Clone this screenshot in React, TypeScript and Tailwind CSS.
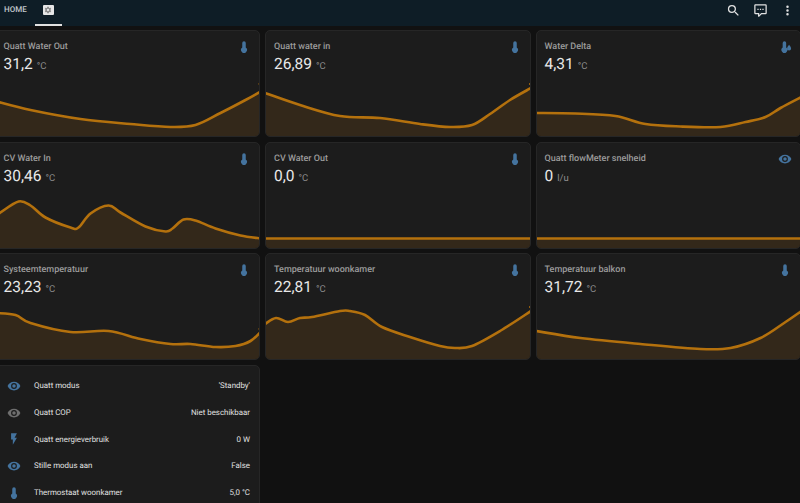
const thermometerSolid = "M15 13V5A3 3 0 0 0 9 5V13A5 5 0 1 0 15 13Z";
const eye = "M12,9A3,3 0 0,0 9,12A3,3 0 0,0 12,15A3,3 0 0,0 15,12A3,3 0 0,0 12,9M12,17A5,5 0 0,1 7,12A5,5 0 0,1 12,7A5,5 0 0,1 17,12A5,5 0 0,1 12,17M12,4.5C7,4.5 2.73,7.61 1,12C2.73,16.39 7,19.5 12,19.5C17,19.5 21.27,16.39 23,12C21.27,7.61 17,4.5 12,4.5Z";
const flash = "M7,2V13H10V22L17,10H13L17,2H7Z";
const thermoWater = "M8 13V5A3 3 0 0 1 14 5V13A5 5 0 1 1 8 13Z M19 8C19 8 15.5 12 15.5 14.5A3.5 3.5 0 0 0 22.5 14.5C22.5 12 19 8 19 8Z";
const magnify = "M9.5,3A6.5,6.5 0 0,1 16,9.5C16,11.11 15.41,12.59 14.44,13.73L14.71,14H15.5L20.5,19L19,20.5L14,15.5V14.71L13.73,14.44C12.59,15.41 11.11,16 9.5,16A6.5,6.5 0 0,1 3,9.5A6.5,6.5 0 0,1 9.5,3M9.5,5C7,5 5,7 5,9.5C5,12 7,14 9.5,14C12,14 14,12 14,9.5C14,7 12,5 9.5,5Z";
const comment = "M9,22A1,1 0 0,1 8,21V18H4A2,2 0 0,1 2,16V4C2,2.89 2.9,2 4,2H20A2,2 0 0,1 22,4V16A2,2 0 0,1 20,18H13.9L10.2,21.71C10,21.9 9.75,22 9.5,22V22H9M10,16V19.08L13.08,16H20V4H4V16H10M17,11V9H15V11H17M13,11V9H11V11H13M9,11V9H7V11H9Z";
const dots = "M12,16A2,2 0 0,1 14,18A2,2 0 0,1 12,20A2,2 0 0,1 10,18A2,2 0 0,1 12,16M12,10A2,2 0 0,1 14,12A2,2 0 0,1 12,14A2,2 0 0,1 10,12A2,2 0 0,1 12,10M12,4A2,2 0 0,1 14,6A2,2 0 0,1 12,8A2,2 0 0,1 10,6A2,2 0 0,1 12,4Z";
const cog = "M12,15.5A3.5,3.5 0 0,1 8.5,12A3.5,3.5 0 0,1 12,8.5A3.5,3.5 0 0,1 15.5,12A3.5,3.5 0 0,1 12,15.5M19.43,12.97C19.47,12.65 19.5,12.33 19.5,12C19.5,11.67 19.47,11.34 19.43,11L21.54,9.37C21.73,9.22 21.78,8.95 21.66,8.73L19.66,5.27C19.54,5.05 19.27,4.96 19.05,5.05L16.56,6.05C16.04,5.66 15.5,5.32 14.87,5.07L14.5,2.42C14.46,2.18 14.25,2 14,2H10C9.75,2 9.54,2.18 9.5,2.42L9.13,5.07C8.5,5.32 7.96,5.66 7.44,6.05L4.95,5.05C4.73,4.96 4.46,5.05 4.34,5.27L2.34,8.73C2.21,8.95 2.27,9.22 2.46,9.37L4.57,11C4.53,11.34 4.5,11.67 4.5,12C4.5,12.33 4.53,12.65 4.57,12.97L2.46,14.63C2.27,14.78 2.21,15.05 2.34,15.27L4.34,18.73C4.46,18.95 4.73,19.03 4.95,18.95L7.44,17.94C7.96,18.34 8.5,18.68 9.13,18.93L9.5,21.58C9.54,21.82 9.75,22 10,22H14C14.25,22 14.46,21.82 14.5,21.58L14.87,18.93C15.5,18.67 16.04,18.34 16.56,17.94L19.05,18.95C19.27,19.03 19.54,18.95 19.66,18.73L21.66,15.27C21.78,15.05 21.73,14.78 21.54,14.63L19.43,12.97Z";

type Pt = [number, number];

interface Sensor {
  name: string;
  value: string;
  unit: string;
  icon: string;
  left: number;
  top: number;
  points: Pt[];
  dot?: Pt;
}

const sensors: Sensor[] = [
  { name: "Quatt Water Out", value: "31,2", unit: "°C", icon: thermometerSolid, left: -5.5, top: 30, dot: [259, 84],
    points: [[-5.5, 101], [30, 110], [80, 119], [130, 124], [170, 127], [195, 125], [220, 113], [245, 100], [261, 91]] },
  { name: "Quatt water in", value: "26,89", unit: "°C", icon: thermometerSolid, left: 265, top: 30, dot: [530, 84],
    points: [[265, 93], [300, 105], [340, 116], [380, 118], [420, 124], [450, 127], [472, 125], [490, 114], [510, 100], [531, 88]] },
  { name: "Water Delta", value: "4,31", unit: "°C", icon: thermoWater, left: 535.5, top: 30,
    points: [[535.5, 113], [575, 113.5], [615, 116], [645, 124], [680, 126.5], [720, 127], [745, 122], [765, 117], [780, 108], [801, 97]] },
  { name: "CV Water In", value: "30,46", unit: "°C", icon: thermometerSolid, left: -5.5, top: 141.5,
    points: [[-5.5, 216], [0, 212], [18, 201], [30, 205], [45, 217], [70, 227], [78, 227], [90, 213], [108, 205], [120, 212], [145, 226], [165, 231], [172, 228], [183, 219], [195, 220], [215, 228], [240, 235], [261, 238]] },
  { name: "CV Water Out", value: "0,0", unit: "°C", icon: thermometerSolid, left: 265, top: 141.5,
    points: [[265, 238], [531, 238]] },
  { name: "Quatt flowMeter snelheid", value: "0", unit: "l/u", icon: eye, left: 535.5, top: 141.5,
    points: [[535.5, 238], [801, 238]] },
  { name: "Systeemtemperatuur", value: "23,23", unit: "°C", icon: thermometerSolid, left: -5.5, top: 253, dot: [259, 329],
    points: [[-5.5, 313], [15, 315], [30, 323], [70, 332], [108, 331], [140, 339], [170, 344], [190, 344], [215, 347], [235, 346], [250, 341], [261, 331]] },
  { name: "Temperatuur woonkamer", value: "22,81", unit: "°C", icon: thermometerSolid, left: 265, top: 253, dot: [530, 307],
    points: [[265, 324], [276, 318], [288, 322], [300, 318], [312, 317], [340, 311], [350, 311], [365, 315], [382, 327], [410, 337], [440, 346], [455, 348], [472, 346], [500, 331], [531, 311]] },
  { name: "Temperatuur balkon", value: "31,72", unit: "°C", icon: thermometerSolid, left: 535.5, top: 253,
    points: [[535.5, 331], [580, 338], [640, 344], [700, 349], [730, 348], [760, 338], [785, 322], [801, 311]] },
];

const rows = [
  { icon: eye, color: "text-[#44739e]", name: "Quatt modus", value: "'Standby'" },
  { icon: eye, color: "text-[#6f6f6f]", name: "Quatt COP", value: "Niet beschikbaar" },
  { icon: flash, color: "text-[#44739e]", name: "Quatt energieverbruik", value: "0 W" },
  { icon: eye, color: "text-[#44739e]", name: "Stille modus aan", value: "False" },
  { icon: thermometerSolid, color: "text-[#44739e]", name: "Thermostaat woonkamer", value: "5,0 °C" },
];

// catmull-rom through the points, good enough for the smoothed graphs
function smooth(pts: Pt[]) {
  let d = `M${pts[0][0]} ${pts[0][1]}`;
  for (let i = 0; i < pts.length - 1; i++) {
    const p0 = pts[i - 1] ?? pts[i];
    const p1 = pts[i];
    const p2 = pts[i + 1];
    const p3 = pts[i + 2] ?? p2;
    const c1x = p1[0] + (p2[0] - p0[0]) / 6;
    const c1y = p1[1] + (p2[1] - p0[1]) / 6;
    const c2x = p2[0] - (p3[0] - p1[0]) / 6;
    const c2y = p2[1] - (p3[1] - p1[1]) / 6;
    d += `C${c1x} ${c1y} ${c2x} ${c2y} ${p2[0]} ${p2[1]}`;
  }
  return d;
}

function Icon({ d, className }: { d: string; className: string }) {
  return (
    <svg viewBox="0 0 24 24" fill="currentColor" className={className}>
      <path d={d} />
    </svg>
  );
}

function SensorCard({ sensor }: { sensor: Sensor }) {
  const chartTop = sensor.top + 40;
  const chartHeight = 66;
  const line = smooth(sensor.points);
  const last = sensor.points[sensor.points.length - 1];
  const first = sensor.points[0];
  const bottom = chartTop + chartHeight;

  return (
    <div className="flex h-[107px] flex-col overflow-hidden rounded-[5px] border border-[#262626] bg-[#1c1c1c]">
      <div className="flex h-[39px] shrink-0 items-start justify-between pl-[8px] pr-[8px] pt-[10px]">
        <div>
          <p className="text-[9px] font-medium leading-[12px] text-[#9b9b9b]">{sensor.name}</p>
          <p className="mt-[1px] leading-[20px]">
            <span className="text-[15.5px] text-[#e8e8e8]">{sensor.value}</span>
            <span className="ml-[4px] text-[9.5px] text-[#8f8f8f]">{sensor.unit}</span>
          </p>
        </div>
        <Icon d={sensor.icon} className="-mt-[1px] h-[14px] w-[14px] text-[#44739e]" />
      </div>
      <svg
        viewBox={`${sensor.left + 1} ${chartTop} 263.5 ${chartHeight}`}
        className="mt-auto h-[66px] w-[263.5px] shrink-0"
      >
        <path d={`${line}L${last[0]} ${bottom}L${first[0]} ${bottom}Z`} fill="#33281a" />
        <path d={line} fill="none" stroke="#b4710d" strokeWidth="2.6" />
        {sensor.dot && <circle cx={sensor.dot[0]} cy={sensor.dot[1]} r="1" fill="#b4710d" />}
      </svg>
    </div>
  );
}

export default function App() {
  return (
    <div className="h-[503px] w-[800px] overflow-hidden bg-[#111111] font-['Roboto',sans-serif] [text-rendering:geometricPrecision]">
      {/* Header */}
      <div className="flex h-[26px] items-start justify-between bg-[#0e1d26]">
        <div className="flex">
          <span className="ml-[4px] mt-[5px] text-[8px] font-medium leading-[10px] text-[#c4c9cc]">HOME</span>
          <div className="ml-[8px] flex h-[26px] w-[27px] justify-center border-b-2 border-[#e1e1e1] pt-[5px]">
            <div className="flex h-[10px] w-[11px] items-center justify-center rounded-[1px] bg-[#e6e6e6]">
              <Icon d={cog} className="h-[8px] w-[8px] text-[#8a8a8a]" />
            </div>
          </div>
        </div>
        <div className="mr-[5px] mt-[2.5px] flex items-center gap-[12px] text-[#e1e1e1]">
          <Icon d={magnify} className="h-[15px] w-[15px]" />
          <Icon d={comment} className="h-[15px] w-[15px]" />
          <Icon d={dots} className="h-[15px] w-[15px]" />
        </div>
      </div>

      {/* Cards */}
      <div className="-ml-[5.5px] grid w-[806.5px] grid-cols-[265.5px_265.5px_265.5px] gap-x-[5px] gap-y-[4.5px] pt-[4px]">
        {sensors.map((sensor) => (
          <SensorCard key={sensor.name} sensor={sensor} />
        ))}
        <div className="rounded-[5px] border border-[#262626] bg-[#1c1c1c] pb-[4px] pt-[7px]">
          {rows.map((row) => (
            <div key={row.name} className="flex h-[26.8px] items-center pl-[11.5px] pr-[9px]">
              <Icon d={row.icon} className={`h-[14px] w-[14px] ${row.color}`} />
              <span className="ml-[13px] text-[7.9px] text-[#e1e1e1]">{row.name}</span>
              <span className="ml-auto text-[7.9px] text-[#e1e1e1]">{row.value}</span>
            </div>
          ))}
        </div>
      </div>
    </div>
  );
}
